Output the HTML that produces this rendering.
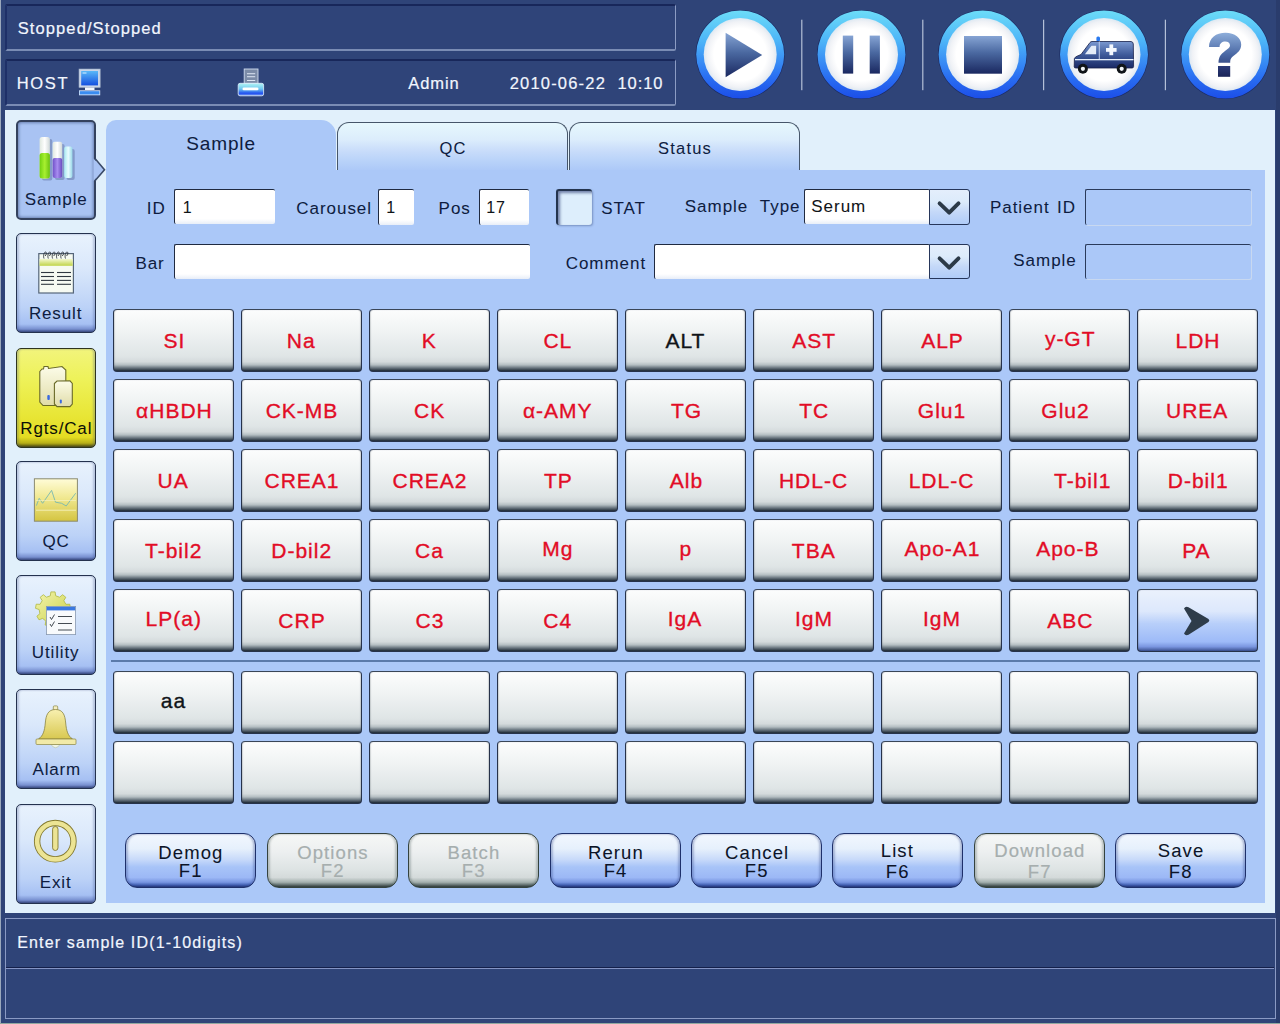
<!DOCTYPE html>
<html><head><meta charset="utf-8">
<style>
*{box-sizing:border-box;margin:0;padding:0}
html,body{width:1280px;height:1024px;overflow:hidden}
body{position:relative;background:#2f4478;font-family:"Liberation Sans",sans-serif;}
.a{position:absolute}
.tx{position:absolute;line-height:1;white-space:pre;-webkit-text-stroke:0.2px currentColor}
.lstrip{left:0;top:0;width:1px;height:1024px;background:#9aa8bc}
.spanel{background:#2f4479;border-top:2px solid #18275a;border-left:2px solid #1e3068;border-right:1px solid #8c9cc4;border-bottom:2px solid #7a8cb4;border-radius:2px}
.sep{width:1px;background:#b8c4d8;top:20px;height:70px}
.light{left:5px;top:110px;width:1270px;height:803px;background:#e1f0fb}
.panel{left:106px;top:170px;width:1159px;height:733px;background:#abc8f8}
.nav{left:16px;width:80px;height:100px;border-radius:5px;border:1px solid #24324e;background:linear-gradient(180deg,#e8f2fd 0%,#dae8fb 35%,#bcd2f7 75%,#a6c0f3 92%,#7890d0 97%,#3c4c80 100%);box-shadow:inset 2px 0 2px rgba(50,70,130,.25),inset -2px 0 2px rgba(50,70,130,.25)}
.nav.act{background:#a9c3f3;border:2px solid #34425e;box-shadow:inset 0 0 3px 1px #6a80b0}
.nav.yel{background:linear-gradient(180deg,#f2f47c 0%,#eef25a 30%,#e8e636 68%,#e4dc22 90%,#b8b018 96%,#4a4810 100%);border-color:#2e3420}
.inp{background:linear-gradient(180deg,#fff 0%,#fff 85%,#e8eef8 100%);border-top:1px solid #202a40;border-left:1px solid #202a40;border-radius:2px}
.chk{border-top:2px solid #24344e;border-left:2px solid #24344e;border-radius:3px;background:#ddeefc;box-shadow:inset 2px 2px 3px #7080a8,1px 1px 2px rgba(60,80,130,.45)}
.dd{border:1px solid #26365a;border-radius:0 3px 3px 0;background:linear-gradient(180deg,#e4eefc 0%,#dcebfb 35%,#c4d8f8 65%,#b0ccf8 100%)}
.dis{border-top:1px solid #2a3a5a;border-left:1px solid #2a3a5a;border-radius:2px;background:#abc8f8;box-shadow:1px 1px 0 #c8d8f0}
.tab{top:122px;height:48px;border:1px solid #46566a;border-bottom:none;border-radius:12px 12px 0 0;background:linear-gradient(180deg,#e6f8fd 0%,#dcedfc 35%,#c8dcfa 60%,#b8d2f9 82%,#adc9f8 100%)}
.btn{width:121px;height:62.6px;border:1px solid #26324a;border-top-color:#3a4658;border-radius:4px;background:linear-gradient(180deg,#fcfdfd 0%,#f0f3f3 35%,#dfe5e6 76%,#d4dadc 85%,#b4bec2 90%,#68747e 95%,#1e2a36 100%);box-shadow:inset 1px 0 1px rgba(40,50,60,.18),inset -1px 0 1px rgba(40,50,60,.18)}
.btn.nxt{background:linear-gradient(180deg,#eaf1fc 0%,#dde8fc 35%,#b8cffa 55%,#9dbaf8 85%,#7a96e0 93%,#3a5090 100%)}
.fbtn{width:130.5px;height:55px;border:1px solid #1e306a;border-radius:12px;background:linear-gradient(180deg,#f2f7fe 0%,#e6f0fc 28%,#c8dafa 48%,#a8c4f8 62%,#9cb8f6 82%,#7896e2 91%,#4462b4 96%,#24387a 100%);box-shadow:inset 2px 0 2px rgba(40,60,130,.3),inset -2px 0 2px rgba(40,60,130,.3)}
.fbtn.dis2{background:linear-gradient(180deg,#f6f8f6 0%,#eceff0 35%,#dde3e3 68%,#d4dada 82%,#a4b0ae 91%,#627070 96%,#34403e 100%);border-color:#34423e;box-shadow:inset 2px 0 2px rgba(40,60,60,.25),inset -2px 0 2px rgba(40,60,60,.25)}
</style></head>
<body>
<div class="a lstrip"></div>
<div class="a spanel" style="left:5px;top:4px;width:671px;height:47px"></div>
<div class="a spanel" style="left:5px;top:59px;width:671px;height:47px"></div>
<div class="tx" style="left:17.75px;top:19.83px;font-size:16.5px;color:#f2f6fe;letter-spacing:1.1px;">Stopped/Stopped</div>
<div class="tx" style="left:16.85px;top:74.83px;font-size:16.5px;color:#f2f6fe;letter-spacing:1.6px;">HOST</div>
<div class="tx" style="left:408.27px;top:75.03px;font-size:16.5px;color:#f2f6fe;letter-spacing:0.9px;">Admin</div>
<div class="tx" style="left:509.67px;top:75.03px;font-size:16.5px;color:#f2f6fe;letter-spacing:1.2px;">2010-06-22</div>
<div class="tx" style="left:617.54px;top:75.03px;font-size:16.5px;color:#f2f6fe;letter-spacing:0.9px;">10:10</div>
<svg class="a" style="left:0;top:0" width="1280" height="110" viewBox="0 0 1280 110">
<defs>
<linearGradient id="ring" x1="0" y1="0" x2="0" y2="1">
<stop offset="0" stop-color="#6cdcf8"/><stop offset="0.35" stop-color="#4cb4f8"/><stop offset="0.75" stop-color="#2a70f2"/><stop offset="1" stop-color="#1c4ee8"/>
</linearGradient>
<radialGradient id="disc" cx="0.5" cy="0.5" r="0.5">
<stop offset="0" stop-color="#ffffff"/><stop offset="0.72" stop-color="#ffffff"/><stop offset="0.9" stop-color="#f0f2f6"/><stop offset="1" stop-color="#dde8f2"/>
</radialGradient>
<linearGradient id="ico" x1="0" y1="0" x2="0" y2="1">
<stop offset="0" stop-color="#86a4d4"/><stop offset="0.45" stop-color="#4a68a0"/><stop offset="1" stop-color="#1a2860"/>
</linearGradient>
<linearGradient id="amb" x1="0" y1="0" x2="0" y2="1">
<stop offset="0" stop-color="#7a98d0"/><stop offset="0.5" stop-color="#3e5a9a"/><stop offset="1" stop-color="#1a2a66"/>
</linearGradient>
<linearGradient id="scr" x1="0" y1="0" x2="0" y2="1">
<stop offset="0" stop-color="#5ab8f8"/><stop offset="1" stop-color="#1450e0"/>
</linearGradient>
<linearGradient id="prb" x1="0" y1="0" x2="0" y2="1">
<stop offset="0" stop-color="#b0f4f4"/><stop offset="0.45" stop-color="#70c8f0"/><stop offset="0.8" stop-color="#2050f0"/><stop offset="1" stop-color="#80a0f0"/>
</linearGradient>
<linearGradient id="qg" gradientUnits="userSpaceOnUse" x1="0" y1="32" x2="0" y2="77"><stop offset="0" stop-color="#90b0dc"/><stop offset="0.5" stop-color="#4a68a4"/><stop offset="1" stop-color="#1c2660"/></linearGradient><linearGradient id="qg2" x1="0" y1="0" x2="0" y2="1"><stop offset="0" stop-color="#2a3a78"/><stop offset="1" stop-color="#1a2458"/></linearGradient>
</defs>
<g id="c1">
<circle cx="740.2" cy="54.5" r="44.6" fill="#1a2a62"/>
<circle cx="740.2" cy="54.5" r="44" fill="url(#ring)"/>
<circle cx="740.2" cy="54.5" r="36.5" fill="url(#disc)"/>
</g>
<circle cx="861.5" cy="54.5" r="44.6" fill="#1a2a62"/><circle cx="861.5" cy="54.5" r="44" fill="url(#ring)"/><circle cx="861.5" cy="54.5" r="36.5" fill="url(#disc)"/>
<circle cx="982.6" cy="54.5" r="44.6" fill="#1a2a62"/><circle cx="982.6" cy="54.5" r="44" fill="url(#ring)"/><circle cx="982.6" cy="54.5" r="36.5" fill="url(#disc)"/>
<circle cx="1104" cy="54.5" r="44.6" fill="#1a2a62"/><circle cx="1104" cy="54.5" r="44" fill="url(#ring)"/><circle cx="1104" cy="54.5" r="36.5" fill="url(#disc)"/>
<circle cx="1225.3" cy="54.5" r="44.6" fill="#1a2a62"/><circle cx="1225.3" cy="54.5" r="44" fill="url(#ring)"/><circle cx="1225.3" cy="54.5" r="36.5" fill="url(#disc)"/>
<rect x="801.2" y="19.7" width="1.2" height="70.5" fill="#b4c0d8"/>
<rect x="922.2" y="19.7" width="1.2" height="70.5" fill="#b4c0d8"/>
<rect x="1043" y="19.7" width="1.2" height="70.5" fill="#b4c0d8"/>
<rect x="1164.8" y="19.7" width="1.2" height="70.5" fill="#b4c0d8"/>
<!-- play -->
<path d="M725.6 32.8 L762.2 55 L725.6 77.2 Z" fill="url(#ico)"/>
<!-- pause -->
<rect x="842.8" y="35.6" width="10.4" height="38" fill="url(#ico)"/>
<rect x="869.7" y="35.6" width="10.2" height="38" fill="url(#ico)"/>
<!-- stop -->
<rect x="964" y="36" width="38" height="37.7" fill="url(#ico)"/>
<!-- ambulance -->
<g transform="translate(1068,30)">
<rect x="28.4" y="6.5" width="3.6" height="5" rx="1.5" fill="#2a7af0"/>
<path d="M6.2 37 L6.4 28.5 Q7 27 9 26.2 L13 24.5 L22 12.5 Q22.8 11.5 24 11.5 L63 11.5 Q65.2 11.8 65.3 14 L65.6 36.5 Q65.5 38 64 38 L8 38 Q6.2 38 6.2 37 Z" fill="url(#amb)" stroke="#16204a" stroke-width="0.8"/>
<path d="M16.9 24.2 L23.5 15.7 L28.1 15.7 L28.1 24.2 Z" fill="#e4ecf8"/>
<rect x="30.8" y="11.5" width="0.9" height="18" fill="#c8d4f0"/>
<rect x="7" y="29" width="58.5" height="1.3" fill="#e8f0fc"/>
<rect x="38" y="18" width="10.6" height="3.8" fill="#f4f8ff"/>
<rect x="41.4" y="14.4" width="3.8" height="10.8" fill="#f4f8ff"/>
<circle cx="14.9" cy="38.8" r="5" fill="#101418"/><circle cx="14.9" cy="38.8" r="2.1" fill="#f0f4f8"/>
<circle cx="53.7" cy="38.8" r="5" fill="#101418"/><circle cx="53.7" cy="38.8" r="2.1" fill="#f0f4f8"/>
</g>
<!-- help -->
<path d="M1209 47 C1209 38 1216 32.8 1225.5 32.8 C1235 32.8 1241.2 38 1241.2 44.5 C1241.2 50 1237.5 53 1234 55.5 C1231.2 57.5 1230.2 59 1230.2 62.8 L1218.5 62.8 C1218.5 57 1221 54 1225 51 C1228.5 48.5 1230 47.5 1230 45.5 C1230 43 1228 41.6 1225.3 41.6 C1222 41.6 1219.6 43.5 1219.6 47 Z" fill="url(#qg)"/><rect x="1218" y="66" width="12.2" height="10.8" fill="url(#qg2)"/>
<!-- monitor -->
<rect x="79" y="69" width="21.2" height="18.5" fill="#c8d4e8" stroke="#9aa8c0" stroke-width="0.6"/>
<rect x="81.2" y="71" width="16.8" height="14.4" fill="url(#scr)"/>
<rect x="82.5" y="72.5" width="4" height="1" fill="#d8f0ff"/>
<rect x="85" y="87.5" width="9.5" height="2.5" fill="#f4f8ff"/>
<rect x="79" y="90.3" width="21.2" height="5" fill="#d0e0f8"/>
<rect x="79.8" y="91.2" width="19.6" height="3.2" fill="#3a8cf0"/>
<!-- printer -->
<rect x="244.2" y="69" width="13.8" height="14.5" fill="#7c8ca8" stroke="#d0dcf0" stroke-width="0.9"/>
<rect x="247" y="73.3" width="8.2" height="0.9" fill="#e8f0fc"/>
<rect x="247" y="76.3" width="8.2" height="0.9" fill="#e8f0fc"/>
<rect x="247" y="80" width="8.2" height="0.9" fill="#e8f0fc"/>
<rect x="238.2" y="83.3" width="25.4" height="12.5" rx="1.8" fill="url(#prb)" stroke="#e0f0ff" stroke-width="0.8"/>
<rect x="242.5" y="87.6" width="16" height="2.6" rx="1.3" fill="#ffffff"/>
</svg>

<div class="a light"></div>
<div class="a panel"></div>
<div class="a nav act" style="top:120px"></div>
<div class="a nav" style="top:233px"></div>
<div class="a nav yel" style="top:348px"></div>
<div class="a nav" style="top:461px"></div>
<div class="a nav" style="top:575px"></div>
<div class="a nav" style="top:689px"></div>
<div class="a nav" style="top:804px"></div>
<svg class="a" style="left:0;top:110px" width="110" height="800" viewBox="0 110 110 800">
<defs>
<linearGradient id="tubeg" x1="0" y1="0" x2="1" y2="0"><stop offset="0" stop-color="#70d010"/><stop offset="0.5" stop-color="#a8f030"/><stop offset="1" stop-color="#68c010"/></linearGradient>
<linearGradient id="tubep" x1="0" y1="0" x2="1" y2="0"><stop offset="0" stop-color="#7050c8"/><stop offset="0.5" stop-color="#a88cf0"/><stop offset="1" stop-color="#6a4cc0"/></linearGradient>
<linearGradient id="tubec" x1="0" y1="0" x2="1" y2="0"><stop offset="0" stop-color="#a8e8f0"/><stop offset="0.5" stop-color="#e8fcff"/><stop offset="1" stop-color="#98d8e8"/></linearGradient>
<linearGradient id="tubew" x1="0" y1="0" x2="1" y2="0"><stop offset="0" stop-color="#e0e8e0"/><stop offset="0.5" stop-color="#ffffff"/><stop offset="1" stop-color="#d0d8d8"/></linearGradient>
<linearGradient id="qcg" x1="0" y1="0" x2="0" y2="1"><stop offset="0" stop-color="#fffcd8"/><stop offset="0.45" stop-color="#f0e890"/><stop offset="1" stop-color="#d4c440"/></linearGradient>
<linearGradient id="bellg" x1="0" y1="0" x2="0" y2="1"><stop offset="0" stop-color="#f8f0b0"/><stop offset="1" stop-color="#d8c850"/></linearGradient>
<linearGradient id="botg" x1="0" y1="0" x2="0" y2="1"><stop offset="0" stop-color="#fcfce8"/><stop offset="1" stop-color="#e0dca8"/></linearGradient>
<linearGradient id="gearg" x1="0" y1="0" x2="1" y2="1"><stop offset="0" stop-color="#f4f4b0"/><stop offset="1" stop-color="#c8d040"/></linearGradient>
<linearGradient id="padg" x1="0" y1="0" x2="0" y2="1"><stop offset="0" stop-color="#f4f8d0"/><stop offset="1" stop-color="#c0d448"/></linearGradient>
</defs>
<!-- pointer -->
<path d="M93.5 158.5 L104.5 169.7 L93.5 181 Z" fill="#a9c3f3"/>
<path d="M95.2 158.8 L104.5 169.7 L95.2 180.6" fill="none" stroke="#3a4a68" stroke-width="1.6"/>
<!-- sample tubes -->
<g opacity="0.35"><rect x="42" y="139" width="10.3" height="41.6" rx="2" fill="#405080"/><rect x="55" y="144" width="9.6" height="36" rx="2" fill="#405080"/><rect x="66.5" y="149" width="8.2" height="31" rx="2" fill="#405080"/></g>
<rect x="39.6" y="136.9" width="10.3" height="41.7" rx="2.5" fill="url(#tubew)"/>
<rect x="39.6" y="153" width="10.3" height="25.6" rx="2.5" fill="url(#tubeg)"/>
<rect x="52.6" y="141.7" width="9.6" height="36.3" rx="2" fill="url(#tubew)"/>
<rect x="52.6" y="158" width="9.6" height="20" rx="2" fill="url(#tubep)"/>
<rect x="64.2" y="146.5" width="8.2" height="31.5" rx="2" fill="url(#tubec)"/>
<!-- result notepad -->
<rect x="38.8" y="253.6" width="34.6" height="39.4" fill="#f6faf2" stroke="#56667a" stroke-width="1.2"/>
<rect x="39.5" y="259" width="33.2" height="6.8" fill="url(#padg)"/>
<g stroke="#303840" stroke-width="1.1">
<line x1="41" y1="272.5" x2="54" y2="272.5"/><line x1="57" y1="272.5" x2="71" y2="272.5"/>
<line x1="41" y1="276.5" x2="54" y2="276.5"/><line x1="57" y1="276.5" x2="71" y2="276.5"/>
<line x1="41" y1="280.4" x2="54" y2="280.4"/><line x1="57" y1="280.4" x2="71" y2="280.4"/>
<line x1="41" y1="284.3" x2="54" y2="284.3"/><line x1="57" y1="284.3" x2="71" y2="284.3"/>
</g>
<g fill="none" stroke="#2a3038" stroke-width="0.9">
<path d="M44 258.5 C43 256 44 252 45.5 252 C47 252 46.5 255 45 256"/><path d="M48.3 258.5 C47.3 256 48.3 252 49.8 252 C51.3 252 50.8 255 49.3 256"/><path d="M52.6 258.5 C51.6 256 52.6 252 54.1 252 C55.6 252 55.1 255 53.6 256"/><path d="M56.9 258.5 C55.9 256 56.9 252 58.4 252 C59.9 252 59.4 255 57.9 256"/><path d="M61.2 258.5 C60.2 256 61.2 252 62.7 252 C64.2 252 63.7 255 62.2 256"/><path d="M65.5 258.5 C64.5 256 65.5 252 67 252 C68.5 252 68 255 66.5 256"/>
</g>
<!-- rgts bottles -->
<path d="M39.8 371.5 L42 369 L43.5 369 L44 366.5 L48 366.5 L48.5 368.5 L62 366.5 L65.8 370 L65.8 402 L61 405.5 L43 405.5 L39.8 402 Z" fill="url(#botg)" stroke="#6a6a28" stroke-width="1.1"/>
<path d="M54.4 383.5 L57 381 L70 380.8 L72.3 383.5 L72.3 404 L70 406.6 L57 406.6 L54.4 404 Z" fill="url(#botg)" stroke="#6a6a28" stroke-width="1.1"/>
<rect x="47.3" y="395" width="2.5" height="5" rx="1" fill="#3a6ae0"/>
<rect x="59.8" y="399.5" width="2" height="4" rx="1" fill="#3a6ae0"/>
<!-- qc chart -->
<rect x="34.4" y="478.8" width="43" height="42.4" fill="url(#qcg)" stroke="#8a8a70" stroke-width="1"/>
<path d="M36.4 505.6 L39.2 498.3 L42.6 503.3 L51.6 490.4 L55.5 502.2 L61.7 503.3 L66.2 506 L75.7 493.2" fill="none" stroke="#78b8b0" stroke-width="0.9"/>
<line x1="36" y1="510.2" x2="76" y2="510.2" stroke="#f8f4c8" stroke-width="0.8"/>
<line x1="36" y1="500.5" x2="76" y2="500.5" stroke="#f8f4c8" stroke-width="0.6"/>
<!-- utility gear -->
<path d="M50.3 595.8 L50.9 591.9 L55.1 591.9 L55.7 595.8 L59.6 597.2 L62.6 594.7 L65.8 597.3 L63.8 600.7 L65.9 604.3 L69.8 604.2 L70.5 608.3 L66.8 609.6 L66.1 613.7 L69.1 616.2 L67.0 619.8 L63.4 618.4 L60.1 621.1 L60.9 624.9 L57.0 626.3 L55.1 622.9 L50.9 622.9 L49.0 626.3 L45.1 624.9 L45.9 621.1 L42.6 618.4 L39.0 619.8 L36.9 616.2 L39.9 613.7 L39.2 609.6 L35.5 608.3 L36.2 604.2 L40.1 604.3 L42.2 600.7 L40.2 597.3 L43.4 594.7 L46.4 597.2 Z" fill="url(#gearg)" stroke="#b0b840" stroke-width="0.8"/>
<rect x="46.4" y="606.4" width="29.2" height="28.2" fill="#f8fafc" stroke="#8898b0" stroke-width="0.8"/>
<rect x="46.8" y="606.8" width="28.4" height="3.6" fill="#3a78e0"/>
<g stroke="#303840" stroke-width="0.9" fill="none">
<line x1="58" y1="616.5" x2="72" y2="616.5"/><line x1="58" y1="623.5" x2="72" y2="623.5"/><line x1="58" y1="630" x2="72" y2="630"/>
<path d="M50 617 L51.5 619.5 L54.5 614.5"/><path d="M50 624 L51.5 626.5 L54.5 621.5"/>
</g>
<!-- bell -->
<rect x="53.3" y="705.9" width="4.4" height="4.5" rx="1" fill="#f4eec0" stroke="#8a8440" stroke-width="0.7"/>
<path d="M55.5 709.5 C48 709.5 46 715 45.3 723 C44.6 731 43 736 38.5 739 L72.5 739 C68 736 66.4 731 65.7 723 C65 715 63 709.5 55.5 709.5 Z" fill="url(#bellg)" stroke="#8a8440" stroke-width="0.8"/>
<path d="M51 744.5 Q55.5 751 60 744.5 Z" fill="#eef4e8" stroke="#b0b890" stroke-width="0.5"/>
<rect x="36" y="739" width="40" height="5.5" rx="1" fill="#f2eaa8" stroke="#8a8440" stroke-width="0.7"/>
<!-- exit -->
<circle cx="55.3" cy="841.2" r="18.2" fill="none" stroke="#847a30" stroke-width="6.4"/>
<circle cx="55.3" cy="841.2" r="18.2" fill="none" stroke="#ece494" stroke-width="4.6"/>
<rect x="52.6" y="826.5" width="5.4" height="24" rx="2.7" fill="#ece494" stroke="#847a30" stroke-width="0.9"/>
</svg>

<div class="tx" style="left:24.85px;top:190.51px;font-size:17px;color:#0e1c40;letter-spacing:0.85px;-webkit-text-stroke:0.05px currentColor">Sample</div>
<div class="tx" style="left:28.95px;top:304.81px;font-size:17px;color:#0e1c40;letter-spacing:0.85px;-webkit-text-stroke:0.05px currentColor">Result</div>
<div class="tx" style="left:20.30px;top:419.91px;font-size:17px;color:#0c1008;letter-spacing:0.85px;-webkit-text-stroke:0.05px currentColor">Rgts/Cal</div>
<div class="tx" style="left:42.55px;top:532.71px;font-size:17px;color:#0e1c40;letter-spacing:0.85px;-webkit-text-stroke:0.05px currentColor">QC</div>
<div class="tx" style="left:31.83px;top:644.41px;font-size:17px;color:#0e1c40;letter-spacing:0.85px;-webkit-text-stroke:0.05px currentColor">Utility</div>
<div class="tx" style="left:32.45px;top:760.81px;font-size:17px;color:#0e1c40;letter-spacing:0.85px;-webkit-text-stroke:0.05px currentColor">Alarm</div>
<div class="tx" style="left:39.72px;top:874.01px;font-size:17px;color:#0e1c40;letter-spacing:0.85px;-webkit-text-stroke:0.05px currentColor">Exit</div>
<div class="a" style="left:106px;top:120px;width:230px;height:52px;background:#abc8f8;border-radius:10px 15px 0 0"></div>
<div class="a tab" style="left:337px;width:231px"></div>
<div class="a tab" style="left:569px;width:231px"></div>
<div class="tx" style="left:186.14px;top:133.82px;font-size:19px;color:#0e1c40;letter-spacing:0.9px;-webkit-text-stroke:0.05px currentColor">Sample</div>
<div class="tx" style="left:439.45px;top:139.93px;font-size:16.5px;color:#0e1c40;letter-spacing:1.2px;-webkit-text-stroke:0.05px currentColor">QC</div>
<div class="tx" style="left:658.04px;top:139.93px;font-size:16.5px;color:#0e1c40;letter-spacing:1.2px;-webkit-text-stroke:0.05px currentColor">Status</div>
<div class="a inp" style="left:174px;top:189px;width:101px;height:35px"></div>
<div class="a inp" style="left:378px;top:189px;width:36px;height:36px"></div>
<div class="a inp" style="left:479px;top:189px;width:50px;height:36px"></div>
<div class="a chk" style="left:556px;top:189px;width:36px;height:36px"></div>
<div class="a inp" style="left:804px;top:189px;width:126px;height:35px"></div>
<div class="a dd" style="left:929px;top:189px;width:41px;height:36px"></div>
<div class="a dis" style="left:1085px;top:189px;width:166px;height:36px"></div>
<div class="a inp" style="left:174px;top:244px;width:356px;height:35px"></div>
<div class="a inp" style="left:654px;top:244px;width:276px;height:35px"></div>
<div class="a dd" style="left:929px;top:244px;width:41px;height:35px"></div>
<div class="a dis" style="left:1085px;top:244px;width:166px;height:35px"></div>
<svg class="a" style="left:936px;top:198.7px" width="28" height="20" viewBox="0 0 28 20"><path d="M3.6 4.3 L13.2 13.6 L22.5 4.3" fill="none" stroke="#2c3a48" stroke-width="3.9" stroke-linecap="round" stroke-linejoin="round"/></svg>
<svg class="a" style="left:936px;top:253.7px" width="28" height="20" viewBox="0 0 28 20"><path d="M3.6 4.3 L13.2 13.6 L22.5 4.3" fill="none" stroke="#2c3a48" stroke-width="3.9" stroke-linecap="round" stroke-linejoin="round"/></svg>

<div class="tx" style="left:146.73px;top:199.51px;font-size:17px;color:#0e1c40;letter-spacing:1.0px;-webkit-text-stroke:0.05px currentColor">ID</div>
<div class="tx" style="left:296.34px;top:199.51px;font-size:17px;color:#0e1c40;letter-spacing:0.95px;-webkit-text-stroke:0.05px currentColor">Carousel</div>
<div class="tx" style="left:438.61px;top:199.51px;font-size:17px;color:#0e1c40;letter-spacing:0.95px;-webkit-text-stroke:0.05px currentColor">Pos</div>
<div class="tx" style="left:601.13px;top:199.51px;font-size:17px;color:#0e1c40;letter-spacing:0.95px;-webkit-text-stroke:0.05px currentColor">STAT</div>
<div class="tx" style="left:684.83px;top:197.61px;font-size:17px;color:#0e1c40;letter-spacing:0.95px;-webkit-text-stroke:0.05px currentColor">Sample</div>
<div class="tx" style="left:759.82px;top:197.61px;font-size:17px;color:#0e1c40;letter-spacing:0.95px;-webkit-text-stroke:0.05px currentColor">Type</div>
<div class="tx" style="left:990.01px;top:199.31px;font-size:17px;color:#0e1c40;letter-spacing:0.95px;-webkit-text-stroke:0.05px currentColor">Patient</div>
<div class="tx" style="left:1056.93px;top:199.31px;font-size:17px;color:#0e1c40;letter-spacing:1.0px;-webkit-text-stroke:0.05px currentColor">ID</div>
<div class="tx" style="left:135.41px;top:254.51px;font-size:17px;color:#0e1c40;letter-spacing:0.95px;-webkit-text-stroke:0.05px currentColor">Bar</div>
<div class="tx" style="left:565.74px;top:254.91px;font-size:17px;color:#0e1c40;letter-spacing:0.95px;-webkit-text-stroke:0.05px currentColor">Comment</div>
<div class="tx" style="left:1013.33px;top:252.11px;font-size:17px;color:#0e1c40;letter-spacing:0.95px;-webkit-text-stroke:0.05px currentColor">Sample</div>
<div class="tx" style="left:182.68px;top:200.36px;font-size:16px;color:#101418;letter-spacing:0px;-webkit-text-stroke:0.05px currentColor">1</div>
<div class="tx" style="left:386.28px;top:200.36px;font-size:16px;color:#101418;letter-spacing:0px;-webkit-text-stroke:0.05px currentColor">1</div>
<div class="tx" style="left:486.28px;top:200.36px;font-size:16px;color:#101418;letter-spacing:0.8px;-webkit-text-stroke:0.05px currentColor">17</div>
<div class="tx" style="left:811.33px;top:197.61px;font-size:17px;color:#101418;letter-spacing:0.95px;-webkit-text-stroke:0.05px currentColor">Serum</div>
<div class="a btn" style="left:113px;top:309px"></div>
<div class="a btn" style="left:241px;top:309px"></div>
<div class="a btn" style="left:369px;top:309px"></div>
<div class="a btn" style="left:497px;top:309px"></div>
<div class="a btn" style="left:625px;top:309px"></div>
<div class="a btn" style="left:753px;top:309px"></div>
<div class="a btn" style="left:881px;top:309px"></div>
<div class="a btn" style="left:1009px;top:309px"></div>
<div class="a btn" style="left:1137px;top:309px"></div>
<div class="a btn" style="left:113px;top:379px"></div>
<div class="a btn" style="left:241px;top:379px"></div>
<div class="a btn" style="left:369px;top:379px"></div>
<div class="a btn" style="left:497px;top:379px"></div>
<div class="a btn" style="left:625px;top:379px"></div>
<div class="a btn" style="left:753px;top:379px"></div>
<div class="a btn" style="left:881px;top:379px"></div>
<div class="a btn" style="left:1009px;top:379px"></div>
<div class="a btn" style="left:1137px;top:379px"></div>
<div class="a btn" style="left:113px;top:449px"></div>
<div class="a btn" style="left:241px;top:449px"></div>
<div class="a btn" style="left:369px;top:449px"></div>
<div class="a btn" style="left:497px;top:449px"></div>
<div class="a btn" style="left:625px;top:449px"></div>
<div class="a btn" style="left:753px;top:449px"></div>
<div class="a btn" style="left:881px;top:449px"></div>
<div class="a btn" style="left:1009px;top:449px"></div>
<div class="a btn" style="left:1137px;top:449px"></div>
<div class="a btn" style="left:113px;top:519px"></div>
<div class="a btn" style="left:241px;top:519px"></div>
<div class="a btn" style="left:369px;top:519px"></div>
<div class="a btn" style="left:497px;top:519px"></div>
<div class="a btn" style="left:625px;top:519px"></div>
<div class="a btn" style="left:753px;top:519px"></div>
<div class="a btn" style="left:881px;top:519px"></div>
<div class="a btn" style="left:1009px;top:519px"></div>
<div class="a btn" style="left:1137px;top:519px"></div>
<div class="a btn" style="left:113px;top:589px"></div>
<div class="a btn" style="left:241px;top:589px"></div>
<div class="a btn" style="left:369px;top:589px"></div>
<div class="a btn" style="left:497px;top:589px"></div>
<div class="a btn" style="left:625px;top:589px"></div>
<div class="a btn" style="left:753px;top:589px"></div>
<div class="a btn" style="left:881px;top:589px"></div>
<div class="a btn" style="left:1009px;top:589px"></div>
<div class="a btn nxt" style="left:1137px;top:589px"></div>
<div class="a btn" style="left:113px;top:671px"></div>
<div class="a btn" style="left:241px;top:671px"></div>
<div class="a btn" style="left:369px;top:671px"></div>
<div class="a btn" style="left:497px;top:671px"></div>
<div class="a btn" style="left:625px;top:671px"></div>
<div class="a btn" style="left:753px;top:671px"></div>
<div class="a btn" style="left:881px;top:671px"></div>
<div class="a btn" style="left:1009px;top:671px"></div>
<div class="a btn" style="left:1137px;top:671px"></div>
<div class="a btn" style="left:113px;top:741px"></div>
<div class="a btn" style="left:241px;top:741px"></div>
<div class="a btn" style="left:369px;top:741px"></div>
<div class="a btn" style="left:497px;top:741px"></div>
<div class="a btn" style="left:625px;top:741px"></div>
<div class="a btn" style="left:753px;top:741px"></div>
<div class="a btn" style="left:881px;top:741px"></div>
<div class="a btn" style="left:1009px;top:741px"></div>
<div class="a btn" style="left:1137px;top:741px"></div>
<div class="tx" style="left:163.57px;top:330.22px;font-size:21px;color:#e20c26;letter-spacing:1.0px;-webkit-text-stroke:0.35px currentColor">SI</div>
<div class="tx" style="left:286.72px;top:330.22px;font-size:21px;color:#e20c26;letter-spacing:1.0px;-webkit-text-stroke:0.35px currentColor">Na</div>
<div class="tx" style="left:421.75px;top:330.22px;font-size:21px;color:#e20c26;letter-spacing:1.0px;-webkit-text-stroke:0.35px currentColor">K</div>
<div class="tx" style="left:543.39px;top:330.22px;font-size:21px;color:#e20c26;letter-spacing:1.0px;-webkit-text-stroke:0.35px currentColor">CL</div>
<div class="tx" style="left:665.46px;top:330.22px;font-size:21px;color:#101418;letter-spacing:1.0px;-webkit-text-stroke:0.35px currentColor">ALT</div>
<div class="tx" style="left:792.30px;top:330.22px;font-size:21px;color:#e20c26;letter-spacing:1.0px;-webkit-text-stroke:0.35px currentColor">AST</div>
<div class="tx" style="left:921.19px;top:330.22px;font-size:21px;color:#e20c26;letter-spacing:1.0px;-webkit-text-stroke:0.35px currentColor">ALP</div>
<div class="tx" style="left:1044.89px;top:328.22px;font-size:21px;color:#e20c26;letter-spacing:1.0px;-webkit-text-stroke:0.35px currentColor">y-GT</div>
<div class="tx" style="left:1175.49px;top:330.22px;font-size:21px;color:#e20c26;letter-spacing:1.0px;-webkit-text-stroke:0.35px currentColor">LDH</div>
<div class="tx" style="left:136.09px;top:399.52px;font-size:21px;color:#e20c26;letter-spacing:1.0px;-webkit-text-stroke:0.35px currentColor">αHBDH</div>
<div class="tx" style="left:265.69px;top:399.52px;font-size:21px;color:#e20c26;letter-spacing:1.0px;-webkit-text-stroke:0.35px currentColor">CK-MB</div>
<div class="tx" style="left:414.00px;top:399.52px;font-size:21px;color:#e20c26;letter-spacing:1.0px;-webkit-text-stroke:0.35px currentColor">CK</div>
<div class="tx" style="left:522.97px;top:399.52px;font-size:21px;color:#e20c26;letter-spacing:1.0px;-webkit-text-stroke:0.35px currentColor">α-AMY</div>
<div class="tx" style="left:670.97px;top:399.52px;font-size:21px;color:#e20c26;letter-spacing:1.0px;-webkit-text-stroke:0.35px currentColor">TG</div>
<div class="tx" style="left:799.17px;top:399.52px;font-size:21px;color:#e20c26;letter-spacing:1.0px;-webkit-text-stroke:0.35px currentColor">TC</div>
<div class="tx" style="left:917.81px;top:399.52px;font-size:21px;color:#e20c26;letter-spacing:1.0px;-webkit-text-stroke:0.35px currentColor">Glu1</div>
<div class="tx" style="left:1041.32px;top:399.52px;font-size:21px;color:#e20c26;letter-spacing:1.0px;-webkit-text-stroke:0.35px currentColor">Glu2</div>
<div class="tx" style="left:1166.04px;top:399.52px;font-size:21px;color:#e20c26;letter-spacing:1.0px;-webkit-text-stroke:0.35px currentColor">UREA</div>
<div class="tx" style="left:157.62px;top:469.52px;font-size:21px;color:#e20c26;letter-spacing:1.0px;-webkit-text-stroke:0.35px currentColor">UA</div>
<div class="tx" style="left:264.47px;top:469.52px;font-size:21px;color:#e20c26;letter-spacing:1.0px;-webkit-text-stroke:0.35px currentColor">CREA1</div>
<div class="tx" style="left:392.48px;top:469.52px;font-size:21px;color:#e20c26;letter-spacing:1.0px;-webkit-text-stroke:0.35px currentColor">CREA2</div>
<div class="tx" style="left:543.90px;top:469.52px;font-size:21px;color:#e20c26;letter-spacing:1.0px;-webkit-text-stroke:0.35px currentColor">TP</div>
<div class="tx" style="left:669.74px;top:469.52px;font-size:21px;color:#e20c26;letter-spacing:1.0px;-webkit-text-stroke:0.35px currentColor">Alb</div>
<div class="tx" style="left:778.95px;top:469.52px;font-size:21px;color:#e20c26;letter-spacing:1.0px;-webkit-text-stroke:0.35px currentColor">HDL-C</div>
<div class="tx" style="left:908.70px;top:469.52px;font-size:21px;color:#e20c26;letter-spacing:1.0px;-webkit-text-stroke:0.35px currentColor">LDL-C</div>
<div class="tx" style="left:1054.02px;top:469.52px;font-size:21px;color:#e20c26;letter-spacing:1.0px;-webkit-text-stroke:0.35px currentColor">T-bil1</div>
<div class="tx" style="left:1167.73px;top:469.52px;font-size:21px;color:#e20c26;letter-spacing:1.0px;-webkit-text-stroke:0.35px currentColor">D-bil1</div>
<div class="tx" style="left:145.04px;top:539.52px;font-size:21px;color:#e20c26;letter-spacing:1.0px;-webkit-text-stroke:0.35px currentColor">T-bil2</div>
<div class="tx" style="left:271.24px;top:539.52px;font-size:21px;color:#e20c26;letter-spacing:1.0px;-webkit-text-stroke:0.35px currentColor">D-bil2</div>
<div class="tx" style="left:415.04px;top:539.52px;font-size:21px;color:#e20c26;letter-spacing:1.0px;-webkit-text-stroke:0.35px currentColor">Ca</div>
<div class="tx" style="left:542.23px;top:537.52px;font-size:21px;color:#e20c26;letter-spacing:1.0px;-webkit-text-stroke:0.35px currentColor">Mg</div>
<div class="tx" style="left:679.42px;top:537.52px;font-size:21px;color:#e20c26;letter-spacing:1.0px;-webkit-text-stroke:0.35px currentColor">p</div>
<div class="tx" style="left:791.86px;top:539.52px;font-size:21px;color:#e20c26;letter-spacing:1.0px;-webkit-text-stroke:0.35px currentColor">TBA</div>
<div class="tx" style="left:904.47px;top:537.52px;font-size:21px;color:#e20c26;letter-spacing:1.0px;-webkit-text-stroke:0.35px currentColor">Apo-A1</div>
<div class="tx" style="left:1036.15px;top:537.52px;font-size:21px;color:#e20c26;letter-spacing:1.0px;-webkit-text-stroke:0.35px currentColor">Apo-B</div>
<div class="tx" style="left:1182.15px;top:539.52px;font-size:21px;color:#e20c26;letter-spacing:1.0px;-webkit-text-stroke:0.35px currentColor">PA</div>
<div class="tx" style="left:145.61px;top:607.52px;font-size:21px;color:#e20c26;letter-spacing:1.0px;-webkit-text-stroke:0.35px currentColor">LP(a)</div>
<div class="tx" style="left:278.35px;top:609.52px;font-size:21px;color:#e20c26;letter-spacing:1.0px;-webkit-text-stroke:0.35px currentColor">CRP</div>
<div class="tx" style="left:415.51px;top:609.52px;font-size:21px;color:#e20c26;letter-spacing:1.0px;-webkit-text-stroke:0.35px currentColor">C3</div>
<div class="tx" style="left:543.35px;top:609.52px;font-size:21px;color:#e20c26;letter-spacing:1.0px;-webkit-text-stroke:0.35px currentColor">C4</div>
<div class="tx" style="left:667.79px;top:607.52px;font-size:21px;color:#e20c26;letter-spacing:1.0px;-webkit-text-stroke:0.35px currentColor">IgA</div>
<div class="tx" style="left:794.89px;top:607.52px;font-size:21px;color:#e20c26;letter-spacing:1.0px;-webkit-text-stroke:0.35px currentColor">IgM</div>
<div class="tx" style="left:922.89px;top:607.52px;font-size:21px;color:#e20c26;letter-spacing:1.0px;-webkit-text-stroke:0.35px currentColor">IgM</div>
<div class="tx" style="left:1047.29px;top:609.52px;font-size:21px;color:#e20c26;letter-spacing:1.0px;-webkit-text-stroke:0.35px currentColor">ABC</div>
<div class="tx" style="left:160.87px;top:689.52px;font-size:21px;color:#101418;letter-spacing:1.0px;-webkit-text-stroke:0.35px currentColor">aa</div>
<svg class="a" style="left:1182px;top:605px" width="30" height="32" viewBox="0 0 30 32"><path d="M2 3.5 Q3.5 0.8 6.5 2.2 L26.5 14 Q28.2 15.5 26.5 17 L6.5 29.8 Q3.5 31.2 2 28.5 L9.5 16 Z" fill="#2e3c4a"/></svg>
<div class="a" style="left:111px;top:660px;width:1149px;height:2px;background:#5a7aaa"></div>
<div class="a fbtn" style="left:125px;top:833px"></div>
<div class="a fbtn dis2" style="left:267px;top:833px"></div>
<div class="a fbtn dis2" style="left:408px;top:833px"></div>
<div class="a fbtn" style="left:550px;top:833px"></div>
<div class="a fbtn" style="left:691px;top:833px"></div>
<div class="a fbtn" style="left:832px;top:833px"></div>
<div class="a fbtn dis2" style="left:974px;top:833px"></div>
<div class="a fbtn" style="left:1115px;top:833px"></div>
<div class="tx" style="left:158.32px;top:843.74px;font-size:18.5px;color:#0c1428;letter-spacing:1.1px;-webkit-text-stroke:0.05px currentColor">Demog</div>
<div class="tx" style="left:178.85px;top:861.64px;font-size:18.5px;color:#0c1428;letter-spacing:1.1px;-webkit-text-stroke:0.05px currentColor">F1</div>
<div class="tx" style="left:297.22px;top:843.74px;font-size:18.5px;color:#a6aeae;letter-spacing:1.1px;">Options</div>
<div class="tx" style="left:320.86px;top:861.64px;font-size:18.5px;color:#a6aeae;letter-spacing:1.1px;">F2</div>
<div class="tx" style="left:447.49px;top:843.74px;font-size:18.5px;color:#a6aeae;letter-spacing:1.1px;">Batch</div>
<div class="tx" style="left:461.80px;top:861.64px;font-size:18.5px;color:#a6aeae;letter-spacing:1.1px;">F3</div>
<div class="tx" style="left:587.95px;top:843.74px;font-size:18.5px;color:#0c1428;letter-spacing:1.1px;-webkit-text-stroke:0.05px currentColor">Rerun</div>
<div class="tx" style="left:603.67px;top:861.64px;font-size:18.5px;color:#0c1428;letter-spacing:1.1px;-webkit-text-stroke:0.05px currentColor">F4</div>
<div class="tx" style="left:725.11px;top:843.74px;font-size:18.5px;color:#0c1428;letter-spacing:1.1px;-webkit-text-stroke:0.05px currentColor">Cancel</div>
<div class="tx" style="left:744.78px;top:861.64px;font-size:18.5px;color:#0c1428;letter-spacing:1.1px;-webkit-text-stroke:0.05px currentColor">F5</div>
<div class="tx" style="left:880.76px;top:841.64px;font-size:18.5px;color:#0c1428;letter-spacing:1.1px;-webkit-text-stroke:0.05px currentColor">List</div>
<div class="tx" style="left:885.80px;top:862.54px;font-size:18.5px;color:#0c1428;letter-spacing:1.1px;-webkit-text-stroke:0.05px currentColor">F6</div>
<div class="tx" style="left:994.35px;top:841.64px;font-size:18.5px;color:#a6aeae;letter-spacing:1.1px;">Download</div>
<div class="tx" style="left:1027.86px;top:862.54px;font-size:18.5px;color:#a6aeae;letter-spacing:1.1px;">F7</div>
<div class="tx" style="left:1157.76px;top:841.64px;font-size:18.5px;color:#0c1428;letter-spacing:1.1px;-webkit-text-stroke:0.05px currentColor">Save</div>
<div class="tx" style="left:1168.80px;top:862.54px;font-size:18.5px;color:#0c1428;letter-spacing:1.1px;-webkit-text-stroke:0.05px currentColor">F8</div>

<div class="a" style="left:5px;top:918px;width:1271px;height:101px;border:1px solid #8a9ac4;border-bottom-width:1.5px"></div>
<div class="a" style="left:1276px;top:0px;width:4px;height:1024px;background:#2a3c6c"></div>
<div class="a" style="left:0px;top:1022.5px;width:1280px;height:1.5px;background:#90a8a0"></div>
<div class="a" style="left:6px;top:967px;width:1268px;height:1px;background:#14204a"></div>
<div class="a" style="left:6px;top:968px;width:1268px;height:1px;background:#8494c4"></div>
<div class="tx" style="left:17.19px;top:935.06px;font-size:16px;color:#f2f6fe;letter-spacing:1.15px;">Enter sample ID(1-10digits)</div>
</body></html>
